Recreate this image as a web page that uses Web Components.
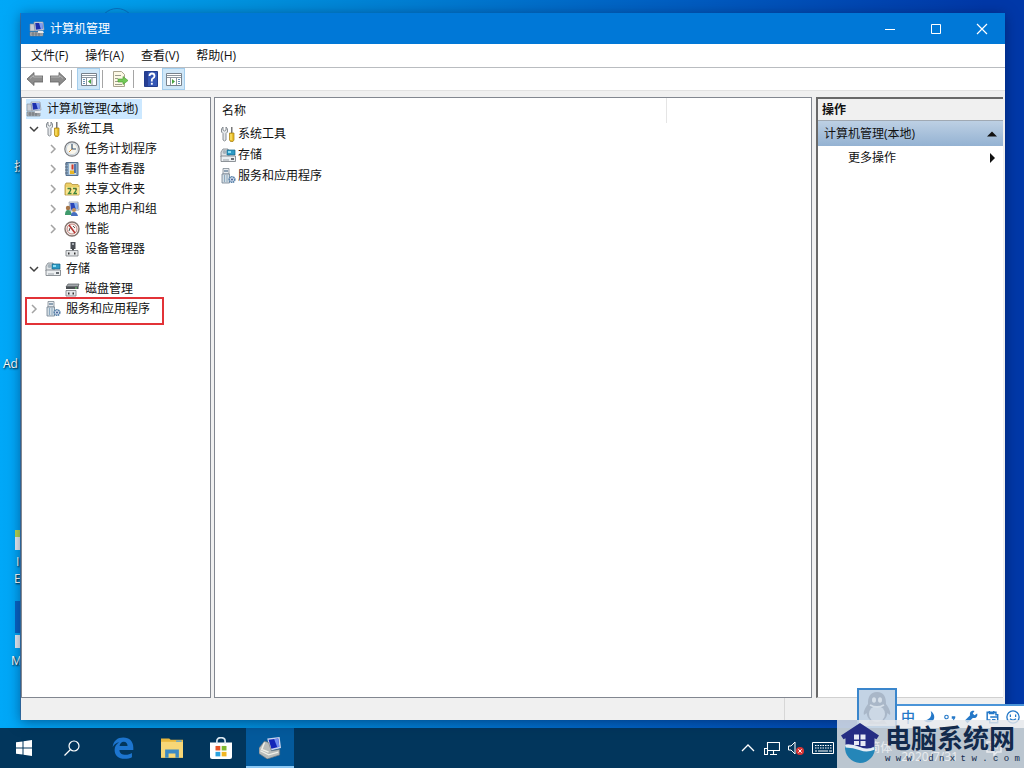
<!DOCTYPE html>
<html lang="zh-CN">
<head>
<meta charset="utf-8">
<title>计算机管理</title>
<style>
html,body{margin:0;height:100%}
body{font:12px/20px "Open Sans","Noto Sans CJK SC",sans-serif;color:#111;overflow:hidden}
</style>
</head>
<body>
<win-desktop></win-desktop>
<script>
const define = (name, html, setup) => customElements.define(name, class extends HTMLElement {
  constructor() {
    super();
    const t = document.createElement('template');
    t.innerHTML = html;
    this.attachShadow({mode: 'open'}).append(t.content.cloneNode(true));
  }
  connectedCallback() { if (setup) setup(this, this.shadowRoot); }
});

const ICONS = {
  computer: `<path d="M5 1h9l1 8-9 1z" fill="#dfe3ea" stroke="#8a93a5" stroke-width=".7"/><path d="M6.200 2h7l.7 6-7 .8z" fill="#1c2fae"/><path d="M10 2h3.200l.7 6-2 .2z" fill="#7f9df0"/><path d="M1 3h4l1 7H1z" fill="#c9ced6" stroke="#858d99" stroke-width=".6"/><path d="M1 11h13v4H1z" fill="#b4b8bd" stroke="#6d7278" stroke-width=".6"/><path d="M2 13h11M4 11v4M7 11v4M10 11v4" stroke="#5d6268" stroke-width=".7"/><path d="M9 10h5l1 2H9z" fill="#e9ebee"/>`,
  tools: `<path d="M3 1v3l1.500 1L6 4V1l1.500 2v3L6 7.500V14l-1.500 1L3 14V7.500L1.500 6V3z" fill="#e4e7ea" stroke="#70777e" stroke-width=".8"/><path d="M11 1h1.500v6H11z" fill="#777"/><path d="M9.500 7h4.500v7l-1 1.500h-2.500l-1-1.500z" fill="#e9bd28" stroke="#a17b10" stroke-width=".7"/><path d="M11 8v6" stroke="#fff08a"/>`,
  clock: `<circle cx="8" cy="8" r="7.200" fill="#e8eef3" stroke="#77797c" stroke-width="1.200"/><circle cx="8" cy="8" r="5.600" fill="#f9f6ec" stroke="#bcc7d1" stroke-width=".7"/><path d="M8 3v5h4" fill="none" stroke="#35516f" stroke-width="1.200"/><path d="M8 8l-3 3" stroke="#d48c37"/>`,
  event: `<path d="M2 1.500h12v13H2z" fill="#8aaac8" stroke="#56718f"/><path d="M5 2.500h7v11H5z" fill="#dfe6e4"/><path d="M7.500 3.500h2v5h-2z" fill="#d33b2c"/><path d="M6 9.500h4.500V13H6z" fill="#e9b524"/><path d="M11 3v9" stroke="#2950a0" stroke-width="1.500"/><path d="M1 3h3M1 6h3M1 9h3M1 12h3" stroke="#5c6d7e"/>`,
  share: `<path d="M1 4l1-2h5l1 1.500h6l1 1V14H1z" fill="#edcf67" stroke="#b1903b" stroke-width=".8"/><path d="M2 6h13v7.500H2z" fill="#f9e58e"/><path d="M3.500 7.500h3v2l-2 3h3M9 7.500h3v2l-2 3h3" fill="none" stroke="#3f843e" stroke-width="1.300"/><path d="M6 7l1 2M11.500 7l1 2" stroke="#7b5727"/>`,
  users: `<path d="M5 1h9l1 8-9 1z" fill="#dfe3ea" stroke="#8a93a5" stroke-width=".7"/><path d="M6.200 2h7l.7 6-7 .8z" fill="#2946b8"/><path d="M10 2h3l.8 6-2 .2z" fill="#86b0ef"/><circle cx="4" cy="7" r="2.200" fill="#a67548"/><path d="M1 14q0-5 3-5t4 5z" fill="#3f9a6c"/><circle cx="10" cy="9" r="2" fill="#c5945f"/><path d="M7 15q0-4 3-4t4 4z" fill="#476fc0"/>`,
  perf: `<circle cx="8" cy="8" r="7" fill="#f8f5f2" stroke="#85736e" stroke-width="1.400"/><circle cx="8" cy="8" r="5" fill="none" stroke="#c5807a"/><path d="M5 4l6 8" stroke="#b63330" stroke-width="1.600"/><path d="M5 10l1-3M9 5l2 2" stroke="#555"/>`,
  device: `<path d="M6.500 1h5v7h-5z" fill="#4c5056"/><path d="M8 2h2v2H8z" fill="#a7adb4"/><path d="M9 7v3" stroke="#44484c" stroke-width="2"/><path d="M2 9.500h12V15H2z" fill="#e4e6e8" stroke="#777b80" stroke-width=".8"/><path d="M4 11.500h1.500v2H4zM10 11.500h1.500v2H10z" fill="#333"/>`,
  storage: `<path d="M1 5l2-3h5l1 3v5H1z" fill="#dfe3e5" stroke="#777f86" stroke-width=".8"/><circle cx="4.500" cy="5" r="2" fill="#a8b3bb"/><path d="M7 3h8v5H7z" fill="#2c9bc6" stroke="#176184" stroke-width=".7"/><path d="M8 4h3v2H8z" fill="#8ddff4"/><path d="M1 9h14.500v5.500H1z" fill="#eceff1" stroke="#747a80" stroke-width=".8"/><path d="M3 13h6" stroke="#9aa1a7"/><path d="M11 11h3v2h-3z" fill="#686e74"/>`,
  disk: `<path d="M4 3h11l-1 3H2z" fill="#a4a8ac" stroke="#55595d" stroke-width=".7"/><path d="M2 5.500h12.500v2.500H2z" fill="#4c5054"/><path d="M11 7h2" stroke="#79d879"/><path d="M2 9.500h10V15H2z" fill="#e4e6e8" stroke="#777b80" stroke-width=".8"/><path d="M4 11.500h1.500v2H4zM8.500 11.500H10v2H8.500z" fill="#333"/>`,
  service: `<path d="M3 .5h6v5.500H3z" fill="#e8ecef" stroke="#7d8992" stroke-width=".8"/><path d="M4 3h4" stroke="#35597a"/><path d="M2 6h7.500v9H2z" fill="#d3dde4" stroke="#71828f" stroke-width=".8"/><path d="M4.500 7v7M7 7v7" stroke="#8fabc0"/><circle cx="12" cy="11.500" r="2.800" fill="#d3e1ee" stroke="#5b83ab" stroke-width="1.600" stroke-dasharray="1.500 .5"/><circle cx="12" cy="11.500" r="1" fill="#4a5d96"/>`,
  back: `<path d="M0 8l7-6.500V5h9v6H7v3.500z" fill="#8c8c8c" stroke="#626262" stroke-width=".8"/><path d="M3 7.500l3.500-3V6H15" fill="none" stroke="#b4b4b4"/>`,
  forward: `<path d="M16 8L9 1.500V5H0v6h9v3.500z" fill="#8c8c8c" stroke="#626262" stroke-width=".8"/><path d="M1 6h8.500V4.500l3.500 3" fill="none" stroke="#b4b4b4"/>`,
  panel: `<path d="M.5 2.500h15v12H.5z" fill="#fff" stroke="#78828c"/><path d="M1 4.500h14M1 6.500h14" stroke="#8e979f"/><path d="M5.500 7v7M11 7v7" stroke="#8b949d"/><path d="M2 8.500h2M2 10.500h2M2 12.500h2" stroke="#6690b4"/><path d="M10 8v5L7 10.500z" fill="#46a33f"/>`,
  panelr: `<path d="M.5 2.500h15v12H.5z" fill="#fff" stroke="#78828c"/><path d="M1 4.500h14M1 6.500h14" stroke="#8e979f"/><path d="M4.500 7v7M10.500 7v7" stroke="#8b949d"/><path d="M12 8.500h2M12 10.500h2M12 12.500h2" stroke="#6690b4"/><path d="M6 8v5l3-2.500z" fill="#46a33f"/>`,
  export: `<path d="M1.500 .5h8l3 3v12h-11z" fill="#fdf9e6" stroke="#a9a48e"/><path d="M3 4.500h6M3 7.500h3M3 10.500h3M3 13.500h7" stroke="#9b9b8c"/><path d="M6 8h5V5.500l5 4-5 4V11H6z" fill="#72c957" stroke="#49972f" stroke-width=".6"/>`,
  help: `<path d="M1.500 .5h13v15h-13z" fill="#3557b5" stroke="#233d8c"/><path d="M2 1h3v14H2z" fill="#273f94"/><path d="M6.500 5q0-2.500 2.500-2.500T11.500 5q0 1.500-1.500 2.300T8.800 9.500v1" fill="none" stroke="#fff" stroke-width="1.800"/><path d="M7.900 11.800h1.900v1.900H7.900z" fill="#fff"/>`,
  min: `<path d="M3 8.500h10" stroke="#fff"/>`,
  max: `<path d="M3.500 3.500h9v9h-9z" fill="none" stroke="#fff"/>`,
  close: `<path d="M3 3l10 10M13 3L3 13" stroke="#fff" stroke-width="1.200"/>`,
  up: `<path d="M3 10.500h10L8 5.500z" fill="#111"/>`,
  right: `<path d="M6 3v10l5-5z" fill="#111"/>`,
  closed: `<path d="M6 4l4 4-4 4" fill="none" stroke="#a3a3a3" stroke-width="1.500"/>`,
  open: `<path d="M4 6l4 4 4-4" fill="none" stroke="#404040" stroke-width="1.500"/>`,
  start: `<path d="M0 2.300l6.500-.9V7.500H0zM7.500 1.200L16 0v7.500H7.500zM0 8.500h6.500v6.100L0 13.700zM7.500 8.500H16V16l-8.500-1.200z" fill="#fff"/>`,
  search: `<circle cx="10" cy="6" r="5" fill="none" stroke="#fff" stroke-width="1.200"/><path d="M6.500 9.500L.5 15.500" stroke="#fff" stroke-width="1.300"/>`,
  edge: `<path d="M.5 7.200C1 2.800 4 .4 8.200.4c4.600 0 7.300 3 7.300 7.200v1.800H5.400c.1 2.400 2 3.500 4.500 3.500 1.800 0 3.300-.5 4.600-1.300v3.100c-1.500.8-3.200 1.200-5.300 1.200-4.500 0-7.300-2.500-7.300-6.500 0-2.400 1.200-4.300 3.300-5.500-1.900.4-3.400 1.500-4.700 3.300zM5.500 6.600h5.800c0-2-1-3.200-2.800-3.200-1.600 0-2.700 1.300-3 3.200z" fill="#1d75cf"/>`,
  folder: `<path d="M0 1h6l1 1h9v13H0z" fill="#e9b83e"/><path d="M0 3.500h16V15H0z" fill="#f7d777"/><path d="M3 15V9h10v6h-2.500v-3h-5v3z" fill="#3c8ac4"/><path d="M11 2.500h4v1h-4z" fill="#55a4dc"/>`,
  store: `<path d="M0 4h16v10.500q0 1.500-1.500 1.500h-13Q0 16 0 14.500z" fill="#fff"/><path d="M5 5V3q0-2.500 3-2.500T11 3v2" fill="none" stroke="#dce8f2" stroke-width="1.200"/><path d="M4 6.500h3.500v3.300H4z" fill="#e65326"/><path d="M8.500 6.500H12v3.300H8.500z" fill="#7eb82f"/><path d="M4 10.800h3.500v3.300H4z" fill="#2ba2de"/><path d="M8.500 10.800H12v3.300H8.500z" fill="#f1b622"/>`,
  mmc: `<path d="M6 1l9-1 1 8-8 2z" fill="#cbd4ee"/><path d="M7 2l7-1 .8 6L9 8.500z" fill="#1426b8"/><path d="M11 1.500l3-.5.8 6-1.500.4z" fill="#6f8cf0"/><path d="M0 8l4-5 3 1 2 6 6-1v4l-9 3-6-4z" fill="#b9bcba" stroke="#71767a" stroke-width=".5"/><path d="M1 10l6 3 7-2M4 4L2 9l5 2" fill="none" stroke="#f0efe7"/>`,
  chevup: `<path d="M2 11l6-6 6 6" fill="none" stroke="#fff" stroke-width="1.300"/>`,
  network: `<path d="M3.500 2.500h12v8h-12zM9.500 10.500V14M6 14.500h7M.5 8.500h3v6h-3z" fill="none" stroke="#fff" stroke-width="1.100"/>`,
  sound: `<path d="M.5 6h2.500L7 2v12l-4-4H.5z" fill="none" stroke="#fff"/><circle cx="12" cy="11" r="4" fill="#d93535"/><path d="M10.300 9.300l3.400 3.400M13.700 9.300l-3.400 3.400" stroke="#fff"/>`,
  keyboard: `<path d="M.5 2.500h21v11H.5z" fill="none" stroke="#fff"/><path d="M3 5.500h17M3 8h17" stroke="#fff" stroke-dasharray="1.500 1"/><path d="M3 11h2M6 11h10M17 11h3" stroke="#fff"/>`,
  note: `<path d="M1 2h14v10h-4l-3 3v-3H1z" fill="none" stroke="#fff" stroke-width="1.500"/><path d="M4 5h8M4 8h8" stroke="#fff"/>`,
  penguin: `<path d="M8 0C4.500 0 3.400 2.500 3.500 6 2 8 1 10 1.500 11.500l1.300-1C3 12 3.500 13 4.500 14L3 16h10l-1.500-2c1-1 1.500-2 1.700-3.500l1.300 1C15 10 14 8 12.500 6 12.600 2.500 11.500 0 8 0z" fill="#a9b7c8"/><ellipse cx="8" cy="11" rx="4" ry="4" fill="#ccd8e5"/><ellipse cx="6.500" cy="4" rx="1" ry="1.400" fill="#d5dfe9"/><ellipse cx="9.500" cy="4" rx="1" ry="1.400" fill="#d5dfe9"/><path d="M4.500 6.500q3.500 2 7 0" stroke="#d5dfe9" fill="none"/>`,
  moon: `<path d="M10 1c2 6-1 10-8 11 4 4 12 2 12-4 0-3-1.500-5-4-7z" fill="#2478c8"/>`,
  dots: `<circle cx="4" cy="8" r="2" fill="none" stroke="#2478c8" stroke-width="1.300"/><path d="M10 7h4v2l-2 3h-1l1-2h-2z" fill="#2478c8"/>`,
  wrench: `<path d="M15 4l-3 2-2-2 2-3C8 0 6 3 7 6l-6 6 3 3 6-6c4 1 6-2 5-5z" fill="#2478c8"/>`,
  clip: `<path d="M2.500 2.500h10v3h2v9h-9v-3h-3zM5 1v3h5V1M6 8h8M8 11h4" fill="none" stroke="#2478c8" stroke-width="1.700"/>`,
  face: `<circle cx="8" cy="8" r="7" fill="none" stroke="#2478c8" stroke-width="1.500"/><path d="M5 5v3M11 5v3M4.500 10q3.500 3 7 0" fill="none" stroke="#2478c8" stroke-width="1.400"/>`,
  house: `<path d="M2 9.300q3-.6 6 .6t6-.4A6.100 6.100 0 0 1 8 16 6.200 6.200 0 0 1 2 9.300z" fill="#2586b8"/><path d="M8 0l7.600 5-1 1.500-.8-.4v3.300q-3 1.600-5.800.4T2.200 8.800V6.100l-.8.4-1-1.500z" fill="#242c83"/><path d="M2.200 8.600q3-.3 5.800 1t5.800 0v1.100q-3 1.300-5.800.2T2.200 9.800z" fill="#e4edf4"/><path d="M5.600 4.600h2v2h-2zM8.200 4.600h2v2h-2zM5.600 7.200h2v1.600h-2zM8.200 7.200h2v2h-2z" fill="#e6eaf4"/>`
};
const makeIcon = name => {
  const i = document.createElement('ui-icon');
  i.setAttribute('name', name);
  return i;
};
define('ui-icon', `<style>:host{display:block;flex:none;width:16px;height:16px}svg{display:block;width:100%;height:100%}</style>`, (el, root) => {
  const n = el.getAttribute('name');
  root.innerHTML += `<svg viewBox="0 0 ${n === 'keyboard' ? 22 : 16} 16" aria-hidden="true">${ICONS[n]}</svg>`;
});

define('title-bar', `<style>
:host{display:flex;align-items:center;height:31px;background:#0078d7;color:#fff;padding-left:8px;gap:5px}
h1{flex:1;margin:0;font:inherit}
nav{display:flex}
button{border:0;background:none;width:46px;height:30px;padding:0;display:grid;place-items:center}
</style><ui-icon name="computer"></ui-icon><h1><slot></slot></h1>
<nav><button aria-label="最小化"><ui-icon name="min"></ui-icon></button><button aria-label="最大化"><ui-icon name="max"></ui-icon></button><button aria-label="关闭"><ui-icon name="close"></ui-icon></button></nav>`);

define('menu-bar', `<style>
:host{display:flex;height:23px;gap:17px;padding-left:10px;background:#fff;border-bottom:1px solid #b9bcc0}
button{border:0;background:none;padding:0;font:inherit;color:inherit}
</style><button>文件(F)</button><button>操作(A)</button><button>查看(V)</button><button>帮助(H)</button>`);

define('tool-bar', `<style>
:host{display:flex;align-items:center;height:22px;padding-left:2px;background:#fff;border-bottom:1px solid #e2e2e2}
button{box-sizing:border-box;border:1px solid transparent;background:none;padding:0;width:23px;height:22px;display:grid;place-items:center;justify-content:center}
button.on{background:#cfe7f8;border-color:#a4cdec}
i{width:1px;height:18px;background:#a5a5a5;margin:0 5px 0 2px}
</style>
<button aria-label="后退"><ui-icon name="back"></ui-icon></button><button aria-label="前进"><ui-icon name="forward"></ui-icon></button><i></i>
<button class="on" aria-label="显示控制台树"><ui-icon name="panel"></ui-icon></button><i></i>
<button aria-label="导出列表"><ui-icon name="export"></ui-icon></button><i></i>
<button aria-label="帮助"><ui-icon name="help"></ui-icon></button><button class="on" aria-label="显示操作窗格"><ui-icon name="panelr"></ui-icon></button>`);

define('tree-item', `<style>
:host{display:block;position:relative}
.row{display:flex;align-items:center;height:20px;gap:3px}
.row>#label{padding:0 2px;white-space:nowrap}
.children{padding-left:19px}
:host([selected]) .row{width:max-content;padding-right:2px;background:#cce8ff}
:host([marked])::after{content:"";position:absolute;left:-1px;top:-2px;width:135px;height:24px;border:2px solid #e23237}
.gap{width:16px;flex:none}
</style><div class="row"><span id="label"></span></div><div class="children" role="group"><slot></slot></div>`, (el, root) => {
  const label = root.getElementById('label');
  label.textContent = el.getAttribute('label');
  el.setAttribute('role', 'treeitem');
  if (!el.hasAttribute('root')) {
    const state = el.getAttribute('state');
    const lead = state ? makeIcon(state) : document.createElement('span');
    if (!state) lead.className = 'gap';
    label.before(lead);
  }
  label.before(makeIcon(el.getAttribute('icon')));
});

define('console-tree', `<style>:host{display:block;box-sizing:border-box;background:#fff;border:1px solid #828790;padding:1px 0 0 4px}</style>
<div role="tree">
<tree-item root selected label="计算机管理(本地)" icon="computer"></tree-item>
<tree-item state="open" label="系统工具" icon="tools">
<tree-item state="closed" label="任务计划程序" icon="clock"></tree-item>
<tree-item state="closed" label="事件查看器" icon="event"></tree-item>
<tree-item state="closed" label="共享文件夹" icon="share"></tree-item>
<tree-item state="closed" label="本地用户和组" icon="users"></tree-item>
<tree-item state="closed" label="性能" icon="perf"></tree-item>
<tree-item label="设备管理器" icon="device"></tree-item>
</tree-item>
<tree-item state="open" label="存储" icon="storage"><tree-item label="磁盘管理" icon="disk"></tree-item></tree-item>
<tree-item marked state="closed" label="服务和应用程序" icon="service"></tree-item>
</div>`);

define('result-list', `<style>
:host{display:block;box-sizing:border-box;background:#fff;border:1px solid #828790}
table{width:100%;border-collapse:collapse;table-layout:fixed}
th{height:25px;box-sizing:border-box;padding:0 0 0 7px;text-align:left;font-weight:400;border-right:1px solid #e5e5e5}
th:first-child{width:451px}th:last-child{border:0}
td{padding:0 0 0 5px;height:21px}
div{display:flex;align-items:center;gap:2px}
</style><table><thead><tr><th scope="col">名称</th><th></th></tr></thead><tbody>
<tr><td><div><ui-icon name="tools"></ui-icon>系统工具</div></td></tr>
<tr><td><div><ui-icon name="storage"></ui-icon>存储</div></td></tr>
<tr><td><div><ui-icon name="service"></ui-icon>服务和应用程序</div></td></tr>
</tbody></table>`);

define('action-pane', `<style>
:host{display:block;box-sizing:border-box;background:#fff;border:solid #696969;border-width:2px 0 1px 2px;border-bottom-color:#d0d0d0}
h2{margin:0;padding-left:4px;font:bold 12px/21px "Open Sans","Noto Sans CJK SC",sans-serif;background:#f0f0f0;border-bottom:1px solid #a0a9b3}
button{display:flex;width:100%;align-items:center;justify-content:space-between;border:0;font:inherit;color:inherit;background:none;height:24px;padding:0 3px 0 30px}
.group{padding-left:6px;height:25px;background:linear-gradient(#bdd0e4,#94b2d2)}
</style><h2>操作</h2><button class="group">计算机管理(本地)<ui-icon name="up"></ui-icon></button><button>更多操作<ui-icon name="right"></ui-icon></button>`);

define('app-window', `<style>
:host{display:flex;flex-direction:column;background:#f0f0f0;box-shadow:0 2px 12px rgba(0,20,60,.5),-1px 0 #3a7db5}
main{flex:1;min-height:0;display:grid;grid-template-columns:190px minmax(0,1fr) 188px;column-gap:3px;padding:6px 2px 0 0}
action-pane{margin-left:1px}
footer{height:22px;display:flex;justify-content:flex-end}
footer span{width:220px;border-left:1px solid #d7d7d7}
</style><title-bar>计算机管理</title-bar><menu-bar></menu-bar><tool-bar></tool-bar>
<main><console-tree></console-tree><result-list></result-list><action-pane></action-pane></main><footer><span></span></footer>`);

define('task-bar', `<style>
:host{display:flex;height:40px;background:#02365c;color:#fff}
button{border:0;background:none;padding:0;width:48px;height:40px;display:grid;place-items:center}
.apps{display:flex;gap:1px;margin-left:3px;flex:1}
.apps ui-icon{width:22px;height:22px}
.apps .on{background:#045a9c;box-shadow:inset 0 -2px #8cc8f4}
.tray{display:flex;align-items:center;gap:8px;padding-right:22px}
ui-icon.kb{width:22px}
.ime{padding-left:6px}
time{padding:18px 20px 0 1px;white-space:nowrap}
</style>
<button aria-label="开始"><ui-icon name="start"></ui-icon></button><button aria-label="搜索"><ui-icon name="search"></ui-icon></button>
<div class="apps"><button aria-label="Edge"><ui-icon name="edge"></ui-icon></button><button aria-label="文件资源管理器"><ui-icon name="folder"></ui-icon></button><button aria-label="应用商店"><ui-icon name="store"></ui-icon></button><button class="on" aria-label="计算机管理"><ui-icon name="mmc"></ui-icon></button></div>
<div class="tray"><ui-icon name="chevup"></ui-icon><ui-icon name="network"></ui-icon><ui-icon name="sound"></ui-icon><ui-icon class="kb" name="keyboard"></ui-icon><span class="ime">中</span><span>简体</span><time>2020/7/31</time><ui-icon name="note"></ui-icon></div>`);

define('ime-bar', `<style>
:host{display:flex;align-items:flex-end;color:#2478c8}
.pet{box-sizing:border-box;width:40px;height:40px;border:2px solid #3a86cc;background:#c3d3e4;display:grid;place-items:center}
.pet ui-icon{width:32px;height:32px}
.bar{box-sizing:border-box;display:flex;align-items:center;justify-content:space-between;width:127px;height:24px;padding:0 4px;background:#fff;border-top:2px solid #4a94d8;font-weight:500;font-size:14px}
.bar ui-icon{width:14px;height:14px}
</style><div class="pet"><ui-icon name="penguin"></ui-icon></div><div class="bar"><span>中</span><ui-icon name="moon"></ui-icon><ui-icon name="dots"></ui-icon><ui-icon name="wrench"></ui-icon><ui-icon name="clip"></ui-icon><ui-icon name="face"></ui-icon></div>`);

define('site-mark', `<style>
:host{display:flex;gap:5px;box-sizing:border-box;width:187px;height:48px;padding:2px 0 0 3px;background:rgba(228,230,234,.82);color:#122a4c}
ui-icon{width:40px;height:42px}
b,small{display:block;white-space:nowrap}
b{font-size:26px;line-height:32px}
small{font:9px/10px "Liberation Mono",monospace}
</style><ui-icon name="house"></ui-icon><div><b>电脑系统网</b><small>w w w . d n x t w . c o m</small></div>`);

define('desk-label', `<style>:host{display:block;position:absolute;color:#fff;line-height:16px;text-shadow:1px 1px 2px #000}</style><slot></slot>`);

define('win-desktop', `<style>
:host{position:relative;display:grid;grid-template-rows:minmax(0,1fr) 40px;height:100vh;overflow:hidden;background:linear-gradient(90deg,#00a8f8,#0090dc 25%,#005fc2 65%,#0038a8 96%)}
app-window{position:relative;margin:13px 19px 8px 21px}
ime-bar,site-mark{position:absolute;right:0;bottom:0}
ime-bar{bottom:40px}
.tile{position:absolute;left:15px;width:10px}
.blue{top:601px;height:32px;background:#0864c4}
.sheet{height:13px;background:#e8eef4}
.yellow{top:530px;height:10px;background:#b8d850}
.arc{position:absolute;left:99px;top:8px;width:34px;height:34px;border:1px solid #0874c4;border-radius:50%}
</style>
<span class="arc"></span><span class="tile yellow"></span><span class="tile sheet" style="top:537px"></span><span class="tile blue"></span><span class="tile sheet" style="top:635px"></span>
<desk-label style="left:14px;top:159px">技</desk-label><desk-label style="left:3px;top:356px">Ad</desk-label><desk-label style="left:16px;top:554px">I</desk-label><desk-label style="left:14px;top:571px">E</desk-label><desk-label style="left:11px;top:653px">M</desk-label>
<app-window></app-window><task-bar></task-bar><ime-bar></ime-bar><site-mark></site-mark>`);
</script>
</body>
</html>
